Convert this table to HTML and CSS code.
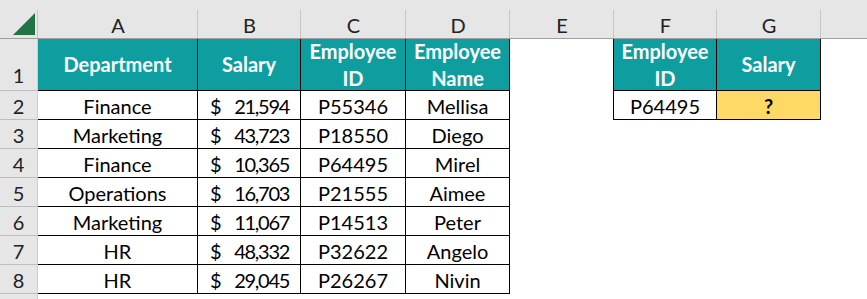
FILE: index.html
```html
<!DOCTYPE html>
<html>
<head>
<meta charset="utf-8">
<link rel="stylesheet" href="styles.css">
</head>
<body>
<div class="sheet">
  <div class="colhead corner"><svg width="38" height="28" viewBox="0 10 38 28"><polygon points="13,35 35,35 35,13" fill="#217346"/></svg></div>
  <div class="colhead">A</div>
  <div class="colhead">B</div>
  <div class="colhead">C</div>
  <div class="colhead">D</div>
  <div class="colhead">E</div>
  <div class="colhead">F</div>
  <div class="colhead">G</div>
  <div class="colhead last"></div>

  <div class="rowhead r1">1</div>
  <div class="cell th">Department</div>
  <div class="cell th">Salary</div>
  <div class="cell th">Employee<br>ID</div>
  <div class="cell th">Employee<br>Name</div>
  <div class="cell edge"></div>
  <div class="cell th">Employee<br>ID</div>
  <div class="cell th">Salary</div>
  <div class="cell"></div>

  <div class="rowhead">2</div>
  <div class="cell td">Finance</div>
  <div class="cell td money"><span>$</span><span class="num">21,594</span></div>
  <div class="cell td">P55346</div>
  <div class="cell td">Mellisa</div>
  <div class="cell edge"></div>
  <div class="cell td">P64495</div>
  <div class="cell td ask">?</div>
  <div class="cell"></div>

  <div class="rowhead">3</div>
  <div class="cell td">Marketing</div>
  <div class="cell td money"><span>$</span><span class="num">43,723</span></div>
  <div class="cell td">P18550</div>
  <div class="cell td">Diego</div>
  <div class="cell"></div><div class="cell"></div><div class="cell"></div><div class="cell"></div>

  <div class="rowhead">4</div>
  <div class="cell td">Finance</div>
  <div class="cell td money"><span>$</span><span class="num">10,365</span></div>
  <div class="cell td">P64495</div>
  <div class="cell td">Mirel</div>
  <div class="cell"></div><div class="cell"></div><div class="cell"></div><div class="cell"></div>

  <div class="rowhead">5</div>
  <div class="cell td">Operations</div>
  <div class="cell td money"><span>$</span><span class="num">16,703</span></div>
  <div class="cell td">P21555</div>
  <div class="cell td">Aimee</div>
  <div class="cell"></div><div class="cell"></div><div class="cell"></div><div class="cell"></div>

  <div class="rowhead">6</div>
  <div class="cell td">Marketing</div>
  <div class="cell td money"><span>$</span><span class="num">11,067</span></div>
  <div class="cell td">P14513</div>
  <div class="cell td">Peter</div>
  <div class="cell"></div><div class="cell"></div><div class="cell"></div><div class="cell"></div>

  <div class="rowhead">7</div>
  <div class="cell td">HR</div>
  <div class="cell td money"><span>$</span><span class="num">48,332</span></div>
  <div class="cell td">P32622</div>
  <div class="cell td">Angelo</div>
  <div class="cell"></div><div class="cell"></div><div class="cell"></div><div class="cell"></div>

  <div class="rowhead">8</div>
  <div class="cell td">HR</div>
  <div class="cell td money"><span>$</span><span class="num">29,045</span></div>
  <div class="cell td">P26267</div>
  <div class="cell td">Nivin</div>
  <div class="cell"></div><div class="cell"></div><div class="cell"></div><div class="cell"></div>

  <div class="rowhead"></div>
  <div class="cell"></div><div class="cell"></div><div class="cell"></div><div class="cell"></div>
  <div class="cell"></div><div class="cell"></div><div class="cell"></div><div class="cell"></div>
</div>
</body>
</html>
```
FILE: styles.css
```css
* { box-sizing: border-box; }
html, body { margin: 0; padding: 0; background: #fff; }
body { width: 867px; height: 299px; overflow: hidden; }

.sheet {
  display: grid;
  grid-template-columns: 38px 160px 103px 105px 104px 104px 103px 104px 1fr;
  grid-template-rows: 39px 52px repeat(7, 29px) 6px;
  font-family: Lato, "Liberation Sans", sans-serif;
  font-size: 20px;
  color: #000;
}

.colhead {
  display: flex;
  align-items: center;
  justify-content: center;
  padding-top: 12px;
  color: #222;
  border-bottom: 1px solid #9e9e9e;
  background:
    linear-gradient(#c6c6c6, #c6c6c6) right 10px / 1px 28px no-repeat,
    #e6e6e6;
}
.colhead.last { background: #e6e6e6; }
.corner { padding-top: 0; justify-content: flex-start; align-items: stretch; }
.corner svg { display: block; margin-top: 10px; }

.rowhead {
  background: #e6e6e6;
  border-right: 1px solid #cfcfcf;
  border-bottom: 1px solid #bdbdbd;
  display: flex;
  align-items: center;
  justify-content: center;
  color: #222;
  padding-top: 1px;
}
.rowhead.r1 { align-items: flex-end; padding-bottom: 3px; }

.cell { background: #fff; }
.edge { border-right: 1px solid #000; }

.th, .td {
  border-right: 1px solid #000;
  border-bottom: 1px solid #000;
  display: flex;
  align-items: center;
  justify-content: center;
  text-align: center;
}
.th {
  background: #0f9e9f;
  color: #fff;
  font-weight: bold;
  line-height: 26.5px;
}
.td { padding-top: 1px; }
.money {
  justify-content: space-between;
  padding: 1px 10px 0 12px;
}
.money .num { letter-spacing: -1.3px; margin-right: 1px; }
.ask {
  background: #ffd966;
  font-weight: bold;
}
```
